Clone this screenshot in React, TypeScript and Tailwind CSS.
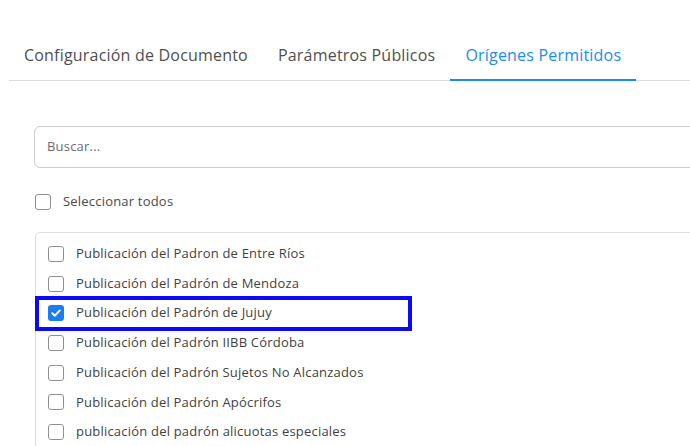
import React from 'react';

const TABS = ['Configuración de Documento', 'Parámetros Públicos', 'Orígenes Permitidos'];
const ACTIVE_TAB = 2;

const ORIGINS = [
    { label: 'Publicación del Padron de Entre Ríos', checked: false },
    { label: 'Publicación del Padrón de Mendoza', checked: false },
    { label: 'Publicación del Padrón de Jujuy', checked: true, highlight: true },
    { label: 'Publicación del Padrón IIBB Córdoba', checked: false },
    { label: 'Publicación del Padrón Sujetos No Alcanzados', checked: false },
    { label: 'Publicación del Padrón Apócrifos', checked: false },
    { label: 'publicación del padrón alicuotas especiales', checked: false },
];

const Checkbox: React.FC<{ checked?: boolean }> = ({ checked }) =>
    checked ? (
        <span className="w-4 h-4 rounded-[3px] bg-[#1b7cf2] flex items-center justify-center shrink-0">
            <svg width="12" height="12" viewBox="0 0 12 12" fill="none">
                <path d="M2.3 6.2 L4.9 8.7 L9.8 3.4" stroke="white" strokeWidth="1.9" strokeLinecap="round" strokeLinejoin="round" />
            </svg>
        </span>
    ) : (
        <span className="w-4 h-4 rounded-[3px] border border-[#8f8f8f] bg-white shrink-0" />
    );

export default function App() {
    return (
        <div
            className="w-[690px] h-[446px] overflow-hidden bg-white text-[#4a4a4a]"
            style={{ fontFamily: '"Open Sans", "Noto Sans", sans-serif' }}
        >
            <div className="w-[900px] pt-[30px]">
                {/* Tabs */}
                <div className="ml-[9px] flex border-b border-[#dcdcdc]">
                    {TABS.map((tab, i) => (
                        <div
                            key={tab}
                            className={`px-[15px] h-[51px] flex items-center text-[16px] tracking-[0.2px] -mb-px ${
                                i === ACTIVE_TAB
                                    ? 'text-[#1a8cf0] border-b-2 border-[#1a8cf0]'
                                    : 'text-[#4f4f4f] border-b-2 border-transparent'
                            }`}
                        >
                            {tab}
                        </div>
                    ))}
                </div>

                <div className="pl-[34px] pt-[45px]">
                    {/* Search */}
                    <div className="h-[42px] rounded-[6px] border border-[#cccccc] flex items-center px-[12px] text-[13px] tracking-[0.2px] text-[#6b6b6b]">
                        Buscar...
                    </div>

                    {/* Select all */}
                    <div className="mt-[26px] ml-px flex items-center gap-[12px] text-[13px] tracking-[0.2px] text-[#4a4a4a] h-[16px]">
                        <Checkbox />
                        <span>Seleccionar todos</span>
                    </div>

                    {/* List */}
                    <div className="mt-[22px] ml-px rounded-[5px] border border-[#dddddd] pt-[6px] pl-[12px] h-[260px]">
                        {ORIGINS.map((o) => (
                            <div key={o.label} className="relative h-[29.7px] flex items-center gap-[12px] text-[13px] tracking-[0.2px] text-[#3f3f3f]">
                                <Checkbox checked={o.checked} />
                                <span>{o.label}</span>
                                {o.highlight && (
                                    <div className="absolute left-[-13px] top-[-2px] w-[377px] h-[35px] border-[4px] border-[#0a0af5] pointer-events-none" />
                                )}
                            </div>
                        ))}
                    </div>
                </div>
            </div>
        </div>
    );
}
